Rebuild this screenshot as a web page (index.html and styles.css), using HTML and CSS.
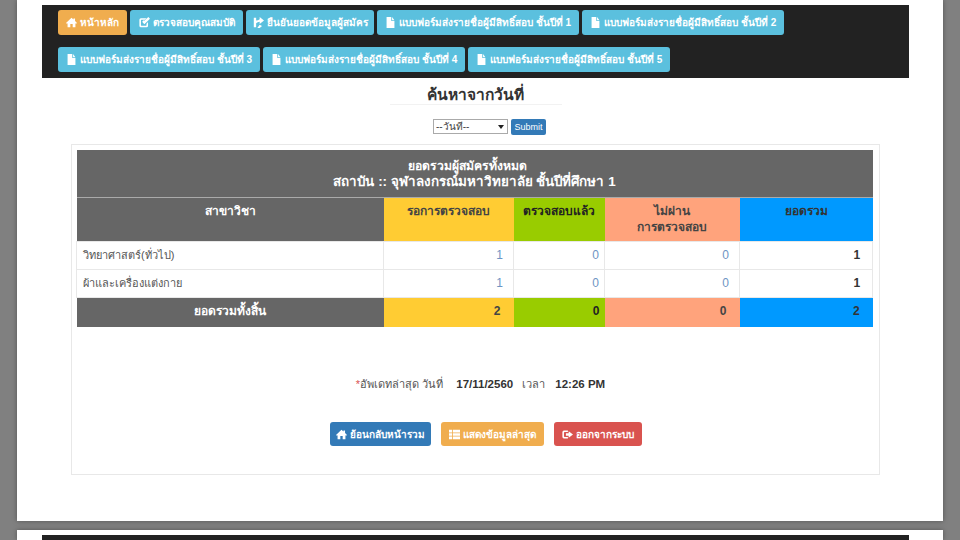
FILE: index.html
```html
<!DOCTYPE html>
<html>

<head>
    <title>ยอดรวมผู้สมัคร</title>
    <meta charset="utf-8">
    <meta name="viewport" content="width=device-width, initial-scale=1.0">
    <link rel="stylesheet" href="styles.css">
</head>

<body>
    <svg class="defs" width="0" height="0">
        <symbol id="i-home" viewBox="0 0 14 14"><path d="M7 1 0 7.600 1.200 8.700 2 8V13H5.500V9H8.500V13H12V8L12.800 8.700 14 7.600 11.500 5.200V2H9.500V3.300Z"/></symbol>
        <symbol id="i-edit" viewBox="0 0 14 14"><path d="M2.500 1.500H9.500L7.500 3.500H3Q2.500 3.500 2.500 4V10.500Q2.500 11 3 11H9Q9.500 11 9.500 10.500V8.500L11.500 6.500V11Q11.500 13 9.500 13H2.500Q.5 13 .5 11V3.500Q.5 1.500 2.500 1.500ZM4.500 6.800 6.800 9.100 14 2.200 11.800 0 6.800 4.800 6 4 4.200 5.800Z"/></symbol>
        <symbol id="i-share" viewBox="0 0 14 14"><path d="M1 1H4V4.500Q6.500 4.500 8.500 3V0L14 4.500 8.500 9V6Q5.500 6 4 8V13H1ZM8.500 10 11.500 11.500 8.500 14H5.500Z"/></symbol>
        <symbol id="i-file" viewBox="0 0 14 14"><path d="M2 0H8V5H12V14H2ZM9 0 12 4H9Z"/></symbol>
        <symbol id="i-list" viewBox="0 0 14 14"><path d="M0 1H4V4.300H0ZM5 1H14V4.300H5ZM0 5.400H4V8.600H0ZM5 5.400H14V8.600H5ZM0 9.700H4V13H0ZM5 9.700H14V13H5Z"/></symbol>
        <symbol id="i-out" viewBox="0 0 14 14"><path d="M2.500 2H7.500V3.800H3.500Q2.500 3.800 2.500 4.800V9.200Q2.500 10.200 3.500 10.200H7.500V12H2.500Q.5 12 .5 10V4Q.5 2 2.500 2ZM5 5.500H8.500V3L14 7 8.500 11V8.500H5Z"/></symbol>
    </svg>

    <div class="sheet">
        <nav class="menu">
            <a class="btn orange"><svg class="ico"><use href="#i-home"/></svg>หน้าหลัก</a>
            <a class="btn sky check"><svg class="ico"><use href="#i-edit"/></svg>ตรวจสอบคุณสมบัติ</a>
            <a class="btn sky confirm"><svg class="ico"><use href="#i-share"/></svg>ยืนยันยอดข้อมูลผู้สมัคร</a>
            <a class="btn sky"><svg class="ico"><use href="#i-file"/></svg>แบบฟอร์มส่งรายชื่อผู้มีสิทธิ์สอบ ชั้นปีที่ 1</a>
            <a class="btn sky"><svg class="ico"><use href="#i-file"/></svg>แบบฟอร์มส่งรายชื่อผู้มีสิทธิ์สอบ ชั้นปีที่ 2</a>
            <a class="btn sky"><svg class="ico"><use href="#i-file"/></svg>แบบฟอร์มส่งรายชื่อผู้มีสิทธิ์สอบ ชั้นปีที่ 3</a>
            <a class="btn sky"><svg class="ico"><use href="#i-file"/></svg>แบบฟอร์มส่งรายชื่อผู้มีสิทธิ์สอบ ชั้นปีที่ 4</a>
            <a class="btn sky"><svg class="ico"><use href="#i-file"/></svg>แบบฟอร์มส่งรายชื่อผู้มีสิทธิ์สอบ ชั้นปีที่ 5</a>
        </nav>

        <h3 class="search-title">ค้นหาจากวันที่</h3>
        <form class="search-form">
            <label class="select-wrap">
                <select class="date-select">
                    <option>--วันที่--</option>
                </select>
            </label>
            <button class="submit" type="button">Submit</button>
        </form>

        <section class="panel">
            <table class="summary">
                <colgroup>
                    <col class="c-name">
                    <col class="c-wait">
                    <col class="c-done">
                    <col class="c-fail">
                    <col class="c-total">
                </colgroup>
                <tr class="title-row">
                    <th colspan="5"><span class="title-top">ยอดรวมผู้สมัครทั้งหมด</span><br>สถาบัน :: จุฬาลงกรณ์มหาวิทยาลัย ชั้นปีที่ศึกษา 1</th>
                </tr>
                <tr class="head-row">
                    <th class="grey">สาขาวิชา</th>
                    <th class="yellow">รอการตรวจสอบ</th>
                    <th class="green">ตรวจสอบแล้ว</th>
                    <th class="salmon">ไม่ผ่าน<br>การตรวจสอบ</th>
                    <th class="blue">ยอดรวม</th>
                </tr>
                <tr class="data-row">
                    <td>วิทยาศาสตร์(ทั่วไป)</td>
                    <td class="num"><a>1</a></td>
                    <td class="num tight"><a>0</a></td>
                    <td class="num"><a>0</a></td>
                    <td class="num sum"><b>1</b></td>
                </tr>
                <tr class="data-row">
                    <td>ผ้าและเครื่องแต่งกาย</td>
                    <td class="num"><a>1</a></td>
                    <td class="num tight"><a>0</a></td>
                    <td class="num"><a>0</a></td>
                    <td class="num sum"><b>1</b></td>
                </tr>
                <tr class="total-row">
                    <th class="grey">ยอดรวมทั้งสิ้น</th>
                    <th class="yellow num">2</th>
                    <th class="green num tight">0</th>
                    <th class="salmon num">0</th>
                    <th class="blue num">2</th>
                </tr>
            </table>

            <p class="updated"><span class="star">*</span>อัพเดทล่าสุด วันที่ <b class="date">17/11/2560</b> เวลา <b class="time">12:26 PM</b></p>

            <div class="actions">
                <a class="btn navy"><svg class="ico"><use href="#i-home"/></svg>ย้อนกลับหน้ารวม</a>
                <a class="btn orange"><svg class="ico"><use href="#i-list"/></svg>แสดงข้อมูลล่าสุด</a>
                <a class="btn red"><svg class="ico"><use href="#i-out"/></svg>ออกจากระบบ</a>
            </div>
        </section>
    </div>

    <div class="sheet sheet-next">
        <div class="menu-edge"></div>
    </div>
</body></html>
```

FILE: styles.css
```css
html, body {
    margin: 0;
    height: 540px;
    overflow: hidden;
}

body {
    background-color: #808080;
    color: #333;
    font-family: "Liberation Sans", "Noto Sans", sans-serif;
    font-size: 12px;
}

.defs {
    display: block;
    height: 0;
}

.sheet {
    width: 867px;
    height: 516px;
    margin: 0 17px 9px;
    padding: 5px 34px 0 25px;
    background: white;
    box-shadow: 0 0 5px rgba(0, 0, 0, 0.35);
}

.sheet-next {
    height: 5px;
    margin-bottom: 0;
}

.menu-edge {
    height: 5px;
    background-color: #222;
}

.menu {
    display: flex;
    flex-wrap: wrap;
    align-content: flex-start;
    gap: 12px 3px;
    height: 73px;
    padding: 5px 16px 0;
    box-sizing: border-box;
    background-color: #222;
}

.btn {
    display: inline-flex;
    align-items: center;
    height: 25px;
    padding: 0 8px;
    border-radius: 3px;
    color: white;
    font-size: 10px;
    font-weight: bold;
    white-space: nowrap;
}

.check {
    padding: 0 8.500px;
}

.confirm {
    padding: 0 6.500px;
}

.ico {
    width: 11px;
    height: 11px;
    margin-right: 3px;
    fill: white;
}

.sky {
    background-color: #5bc0de;
}

.orange {
    background-color: #f0ad4e;
}

.navy {
    background-color: #337ab7;
}

.red {
    background-color: #d9534f;
}

.search-title {
    width: 172px;
    margin: 8px auto 0;
    border-bottom: 1px solid #f2f2f2;
    color: #333;
    font-size: 15.500px;
    line-height: 18px;
    text-align: center;
}

.search-form {
    display: flex;
    justify-content: center;
    gap: 3px;
    height: 16px;
    margin: 14px 0 9px;
    padding-left: 28px;
}

.select-wrap {
    position: relative;
    display: block;
    width: 75px;
    height: 15px;
}

.select-wrap::after {
    content: "";
    position: absolute;
    top: 6px;
    right: 4px;
    border: 3px solid transparent;
    border-top: 4px solid #222;
    border-bottom: 0;
}

.date-select {
    display: block;
    width: 75px;
    height: 15px;
    padding: 0 0 0 2px;
    border: 1px solid #aaa;
    border-radius: 0;
    appearance: none;
    background: white;
    color: #444;
    font-family: inherit;
    font-size: 10px;
}

.submit {
    width: 35px;
    height: 16px;
    padding: 0;
    border: 0;
    border-radius: 2px;
    background-color: #337ab7;
    color: white;
    font-family: inherit;
    font-size: 9px;
}

.panel {
    width: 798px;
    height: 319px;
    margin: 0 auto;
    padding: 5px 5px 5px 4px;
    border: 1px solid #e8e8e8;
    background: white;
}

.summary {
    width: 797px;
    border-collapse: collapse;
    table-layout: fixed;
}

.c-name {
    width: 307px;
}

.c-wait {
    width: 130px;
}

.c-done {
    width: 91px;
}

.c-fail {
    width: 135px;
}

.c-total {
    width: 133px;
}

.summary th, .summary td {
    font-size: 12px;
    line-height: 16px;
}

.summary .title-row th {
    height: 47px;
    padding: 2px 0 0;
    box-sizing: border-box;
    border-bottom: 1px solid #aaa;
    background-color: #666;
    color: white;
    font-size: 13.400px;
}

.title-top {
    padding-right: 14px;
    font-size: 12.200px;
}

.head-row th {
    height: 44px;
    padding: 5px 0 0;
    box-sizing: border-box;
    vertical-align: top;
    font-weight: bold;
}

.grey {
    background-color: #666;
    color: white;
}

.summary .yellow {
    background-color: #fc3;
    color: #444;
}

.summary .green {
    background-color: #9c0;
    color: #222;
}

.summary .salmon {
    background-color: #ffa37c;
    color: #444;
}

.summary .blue {
    background-color: #09f;
    color: #333;
}

.summary .data-row td {
    height: 28px;
    padding: 0 6px;
    box-sizing: border-box;
    border: 1px solid #e8e8e8;
    color: #555;
    font-size: 11px;
}

.summary .data-row .num {
    padding-right: 10px;
    font-size: 12px;
    text-align: right;
}

.summary .data-row .tight, .summary .total-row .tight {
    padding-right: 5px;
}

.summary .data-row .sum {
    padding-right: 12px;
}

.data-row a {
    color: #6d94c4;
}

.data-row b {
    color: #333;
}

.total-row th {
    height: 30px;
    padding: 0 0 3px;
    box-sizing: border-box;
}

.total-row .num {
    padding-right: 13px;
    text-align: right;
}

.updated {
    margin: 49px 0 0;
    padding-left: 11px;
    color: #555;
    font-size: 11px;
    line-height: 16px;
    text-align: center;
}

.updated b {
    color: #333;
    font-size: 11.500px;
}

.date {
    margin: 0 6px 0 10px;
}

.time {
    margin-left: 7px;
}

.star {
    color: #d9534f;
}

.actions {
    display: flex;
    justify-content: center;
    gap: 10px;
    margin-top: 30px;
    padding-left: 21px;
}

.actions .btn {
    height: 24px;
}

.actions .navy {
    padding: 0 6px;
}
```
